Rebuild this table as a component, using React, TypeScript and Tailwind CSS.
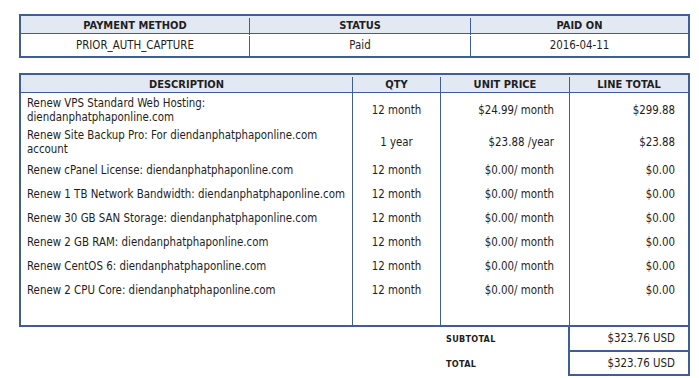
import React from "react";

const font = { fontFamily: '"DejaVu Sans Condensed", "DejaVu Sans", Tahoma, sans-serif' };

const rows = [
  { d: ["Renew VPS Standard Web Hosting:", "diendanphatphaponline.com"], q: "12 month", u: "$24.99/ month", t: "$299.88" },
  { d: ["Renew Site Backup Pro: For diendanphatphaponline.com", "account"], q: "1 year", u: "$23.88 /year", t: "$23.88" },
  { d: ["Renew cPanel License: diendanphatphaponline.com"], q: "12 month", u: "$0.00/ month", t: "$0.00" },
  { d: ["Renew 1 TB Network Bandwidth: diendanphatphaponline.com"], q: "12 month", u: "$0.00/ month", t: "$0.00" },
  { d: ["Renew 30 GB SAN Storage: diendanphatphaponline.com"], q: "12 month", u: "$0.00/ month", t: "$0.00" },
  { d: ["Renew 2 GB RAM: diendanphatphaponline.com"], q: "12 month", u: "$0.00/ month", t: "$0.00" },
  { d: ["Renew CentOS 6: diendanphatphaponline.com"], q: "12 month", u: "$0.00/ month", t: "$0.00" },
  { d: ["Renew 2 CPU Core: diendanphatphaponline.com"], q: "12 month", u: "$0.00/ month", t: "$0.00" },
];

export default function App() {
  return (
    <div className="bg-white w-[699px] h-[378px] pl-[19px] pt-[14px] text-[#1e1e1e] text-[11.4px]" style={font}>
      {/* Payment table */}
      <div className="w-[671px] border-2 border-[#3d5e99]">
        <div className="grid grid-cols-[228px_221px_218px] bg-[#e3e9f3] border-b border-[#3d5e99] h-[18px] pt-[2px] font-bold text-[11px]">
          <div className="flex items-center justify-center">PAYMENT METHOD</div>
          <div className="flex items-center justify-center border-l border-[#3d5e99]">STATUS</div>
          <div className="flex items-center justify-center border-l border-[#3d5e99]">PAID ON</div>
        </div>
        <div className="grid grid-cols-[228px_221px_218px] h-[22px] pt-[2px]">
          <div className="flex items-center justify-center">PRIOR_AUTH_CAPTURE</div>
          <div className="flex items-center justify-center border-l border-[#3d5e99]">Paid</div>
          <div className="flex items-center justify-center border-l border-[#3d5e99]">2016-04-11</div>
        </div>
      </div>

      {/* Items table */}
      <div className="mt-[15px] w-[671px] border-2 border-[#3d5e99]">
        <div className="grid grid-cols-[331px_88px_129px_119px] bg-[#e3e9f3] border-b border-[#3d5e99] h-[18px] pt-[2px] font-bold text-[11px]">
          <div className="flex items-center justify-center">DESCRIPTION</div>
          <div className="flex items-center justify-center border-l border-[#3d5e99]">QTY</div>
          <div className="flex items-center justify-center border-l border-[#3d5e99]">UNIT PRICE</div>
          <div className="flex items-center justify-center border-l border-[#3d5e99]">LINE TOTAL</div>
        </div>
        {rows.map((r, i) => (
          <div key={i} className="grid grid-cols-[331px_88px_129px_119px] min-h-[24px] leading-[14px]">
            <div className="flex flex-col justify-center px-[6px] pt-[3px] pb-[1px]">
              {r.d.map((l, j) => (
                <div key={j}>{l}</div>
              ))}
            </div>
            <div className="flex items-center justify-center pt-[2px] border-l border-[#3d5e99]">{r.q}</div>
            <div className="flex items-center justify-end pt-[2px] pr-[15px] border-l border-[#3d5e99]">{r.u}</div>
            <div className="flex items-center justify-end pt-[2px] pr-[13px] border-l border-[#3d5e99]">{r.t}</div>
          </div>
        ))}
        <div className="grid grid-cols-[331px_88px_129px_119px] h-[24px]">
          <div />
          <div className="border-l border-[#3d5e99]" />
          <div className="border-l border-[#3d5e99]" />
          <div className="border-l border-[#3d5e99]" />
        </div>
      </div>

      {/* Totals */}
      <div className="grid grid-cols-[333px_88px_128px_122px] w-[671px]">
        <div />
        <div />
        <div className="flex flex-col">
          <div className="h-[25px] flex items-center pl-[6px] pt-[1px] font-bold text-[9px] tracking-[0.3px]">SUBTOTAL</div>
          <div className="h-[24px] flex items-center pl-[6px] pt-[1px] font-bold text-[9px] tracking-[0.3px]">TOTAL</div>
        </div>
        <div className="flex flex-col border-l-2 border-r-2 border-b-2 border-[#3d5e99]">
          <div className="h-[25px] flex items-center justify-end pt-[1px] pr-[13px] border-b-2 border-[#3d5e99]">$323.76 USD</div>
          <div className="h-[22px] flex items-center justify-end pt-[1px] pr-[13px]">$323.76 USD</div>
        </div>
      </div>
    </div>
  );
}
